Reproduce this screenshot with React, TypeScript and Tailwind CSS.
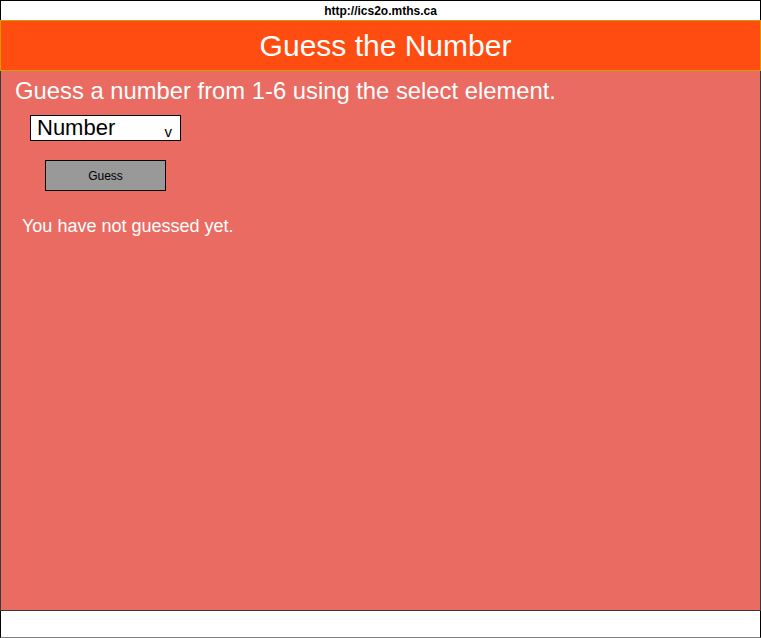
export default function App() {
  return (
    <div className="w-[761px] h-[638px] flex flex-col font-['Liberation_Sans',Arial,sans-serif] bg-white">
      <div className="h-[20px] border-t border-l border-r border-black flex items-center justify-center text-[12px] font-bold text-black leading-none pt-[1px]">
        http://ics2o.mths.ca
      </div>
      <div className="h-[51px] bg-[#FF4C11] border border-[#D79B00] flex items-center justify-center pl-[10px] text-white text-[30px] leading-none">
        Guess the Number
      </div>
      <div className="h-[540px] bg-[#EA6B62] border-l border-r border-b border-[#36393D] flex flex-col">
        <div className="pl-[14px] pt-[6px] text-white text-[23.8px] leading-[28px]">
          Guess a number from 1-6 using the select element.
        </div>
        <div className="pl-[29px] pt-[10px]">
          <div className="w-[151px] h-[26px] bg-white border border-black flex items-center justify-between pl-[6px] pr-[8px]">
            <span className="text-[22px] leading-none text-black">Number</span>
            <span className="text-[15px] leading-none text-black mt-[7px]">v</span>
          </div>
        </div>
        <div className="pl-[44px] pt-[19px]">
          <div className="w-[121px] h-[31px] bg-[#999999] border border-black flex items-center justify-center text-[12px] text-black">
            Guess
          </div>
        </div>
        <div className="pl-[21px] pt-[24px] text-white text-[18px] leading-[22px]">
          You have not guessed yet.
        </div>
      </div>
      <div className="h-[27px] bg-white border-l border-r border-black border-b-[1px] border-b-[#808080]"></div>
    </div>
  );
}
